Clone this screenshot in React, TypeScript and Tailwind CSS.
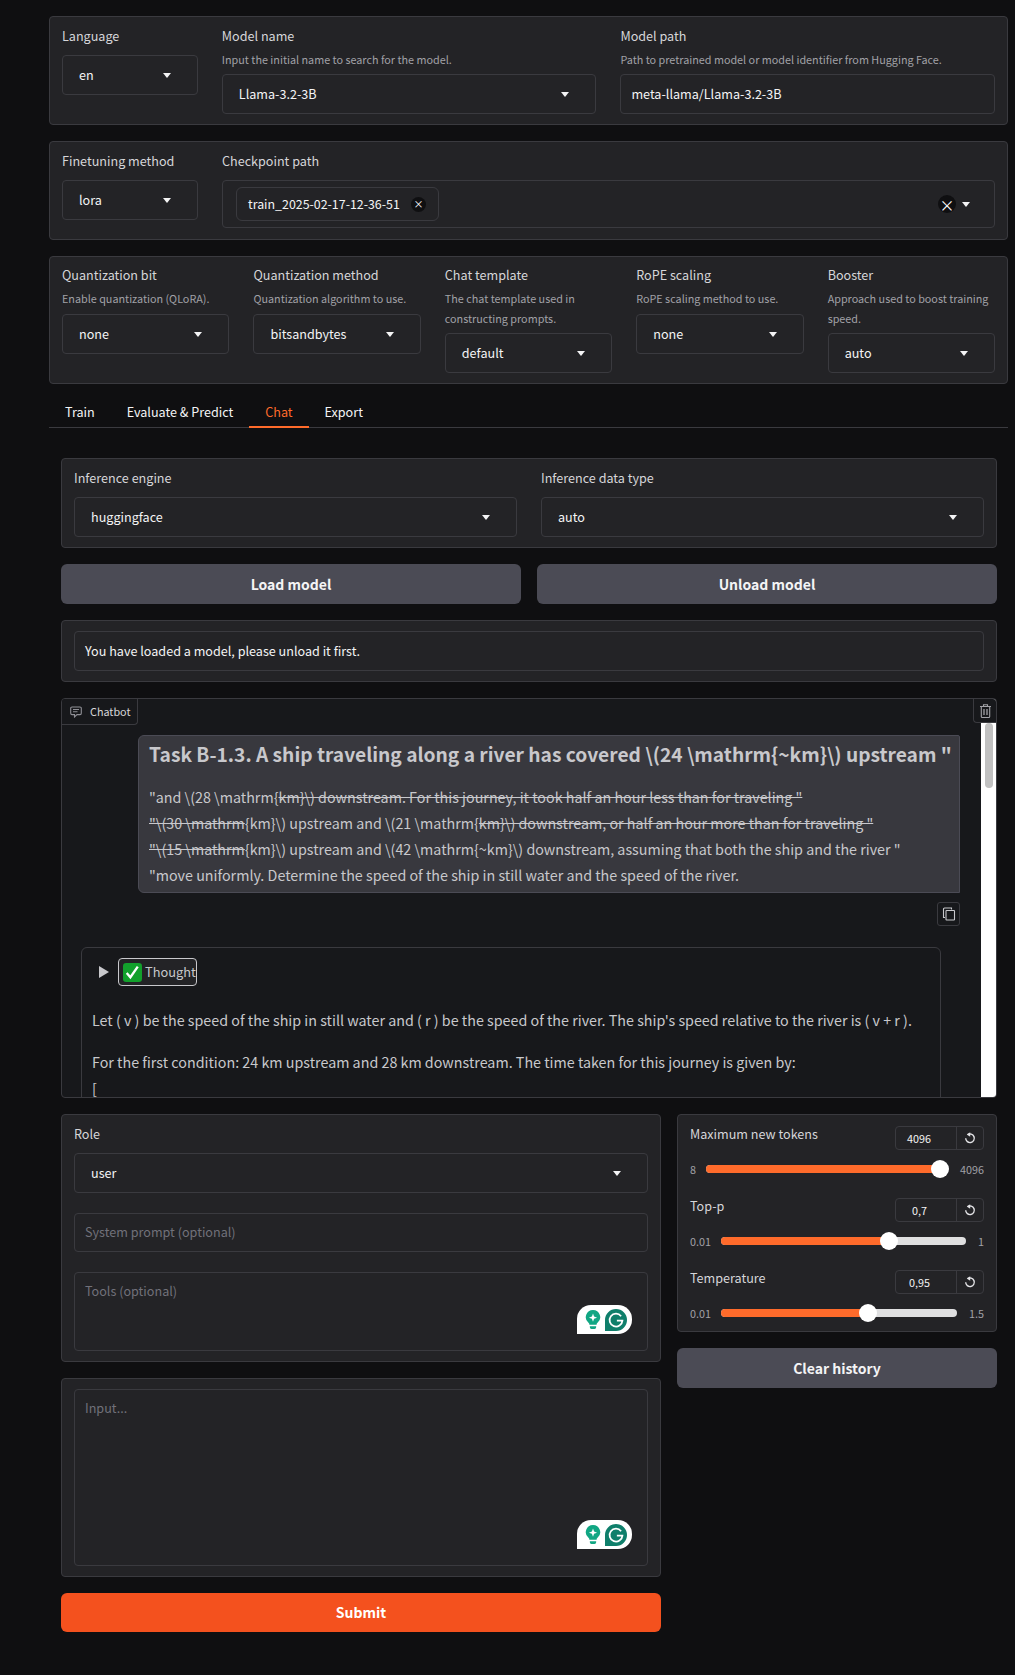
import React from "react";

const Arrow = () => (
  <svg width="8" height="5" viewBox="0 0 8 5" className="shrink-0"><path d="M0 0h8L4 5z" fill="#f4f4f5" /></svg>
);

const ResetIcon = () => (
  <svg width="12" height="12" viewBox="0 0 12 12" fill="none">
    <path d="M3.600 2.700a4.300 4.300 0 1 1-1.900 3.600" stroke="#e4e4e7" strokeWidth="1.400" />
    <path d="M6.200 0.200v4.600L2.800 2.500z" fill="#e4e4e7" />
  </svg>
);

const ChatIcon = () => (
  <svg width="12" height="12" viewBox="0 0 12 12" fill="none" stroke="#8f8f95" strokeWidth="1.100">
    <path d="M2 1h8a1.300 1.300 0 0 1 1.300 1.300v5A1.300 1.300 0 0 1 10 8.600H7L4.500 11V8.600H2A1.300 1.300 0 0 1 .7 7.300v-5A1.300 1.300 0 0 1 2 1z" />
    <path d="M3 3.500h6M3 5.800h4.500" />
  </svg>
);

const TrashIcon = () => (
  <svg width="11" height="14" viewBox="0 0 11 14" fill="none" stroke="#a1a1a6" strokeWidth="1.100">
    <path d="M0 2.500h11M3.500 2.500V.8h4v1.700" />
    <path d="M1.300 2.500v10a1 1 0 0 0 1 1h6.400a1 1 0 0 0 1-1v-10" />
    <path d="M4 5v6M7 5v6" strokeWidth="1.300" />
  </svg>
);

const CopyIcon = () => (
  <svg width="14" height="14" viewBox="0 0 14 14" fill="none" stroke="#c8c8cc" strokeWidth="1.100">
    <path d="M3 10.500H1.500V2a1 1 0 0 1 1-1H9.500v1.500" />
    <rect x="4" y="3.500" width="8.500" height="9.500" rx="0.600" />
  </svg>
);

const Label = ({ children }: { children: React.ReactNode }) => (
  <div className="text-[12.600px] leading-[20px] text-[#d6d6d9]">{children}</div>
);
const Info = ({ children }: { children: React.ReactNode }) => (
  <div className="text-[10.800px] leading-[20px] text-[#a1a1a6] mt-[3px]">{children}</div>
);

const Select = ({ value, cls = "" }: { value: string; cls?: string }) => (
  <div className={`h-[40px] flex items-center justify-between pl-[16px] pr-[26px] rounded-[4px] border border-[#3a3a3f] bg-[#232326] text-[12.600px] text-[#f4f4f5] ${cls}`}>
    <span>{value}</span>
    <Arrow />
  </div>
);

const Panel = ({ children, cls = "" }: { children: React.ReactNode; cls?: string }) => (
  <div className={`rounded-[4px] border border-[#3a3a3f] bg-[#232326] ${cls}`}>{children}</div>
);

const Grammarly = () => (
  <div className="absolute right-[15px] bottom-[16px] w-[55px] h-[29px] rounded-tl-[14px] rounded-r-[14px] bg-white flex items-center justify-between pl-[8px] pr-[5px]">
    <svg width="16" height="19" viewBox="0 0 17 21">
      <path d="M8.500 0a8 8 0 0 1 5 14.200c-.7.6-1 1.300-1 2H4.500c0-.7-.3-1.400-1-2A8 8 0 0 1 8.500 0z" fill="#11a683" />
      <path d="M5 18h7v1.200a1.800 1.800 0 0 1-1.800 1.800H6.800A1.800 1.800 0 0 1 5 19.200z" fill="#11a683" />
      <path d="M8.500 4l1.200 3.300L13 8.500l-3.300 1.200L8.500 13l-1.200-3.300L4 8.500l3.300-1.200z" fill="#fff" />
    </svg>
    <svg width="22" height="22" viewBox="0 0 25 25">
      <path d="M12.500 0a12.500 12.500 0 0 1 0 25H0V12.500A12.500 12.500 0 0 1 12.500 0z" fill="#0f7f6b" />
      <path d="M18.300 8.200a7.300 7.300 0 1 0 1.500 5h-6.300" fill="none" stroke="#fff" strokeWidth="2" />
    </svg>
  </div>
);

const Slider = ({ label, value, min, max, left, track, thumb, gapTop, inputPad }: { label: string; value: string; min: string; max: string; left: number; track: number; thumb: number; gapTop: string; inputPad: string }) => (
  <div className={gapTop}>
    <div className="flex justify-between h-[24px]">
      <span className="text-[12.600px] leading-[16px] text-[#d6d6d9]">{label}</span>
      <div className="flex w-[89px] h-[24px] rounded-[4px] border border-[#3a3a3f] text-[10.800px] text-[#f4f4f5]">
        <span className={`w-[61px] border-r border-[#3a3a3f] leading-[23px] ${inputPad}`}>{value}</span>
        <span className="flex-1 flex items-center justify-center"><ResetIcon /></span>
      </div>
    </div>
    <div className="flex items-center mt-[7px] h-[24px] text-[10.800px] text-[#a1a1a6]">
      <span style={{ width: left }} className="shrink-0">{min}</span>
      <div className="relative h-[8px] rounded-full bg-[#dfdfe0]" style={{ width: track }}>
        <div className="absolute left-0 top-0 h-full rounded-full bg-[#ff6b2b]" style={{ width: thumb }} />
        <div className="absolute top-[-5px] w-[18px] h-[18px] rounded-full bg-white" style={{ left: thumb - 9 }} />
      </div>
      <span className="ml-auto">{max}</span>
    </div>
  </div>
);

const S = ({ children }: { children: React.ReactNode }) => <span className="line-through">{children}</span>;

export default function App() {
  return (
    <div className="min-h-[1675px] bg-[#0f0f11] font-['Noto_Sans_CJK_SC','Noto_Sans',sans-serif] pl-[49px] pr-[7px] pt-[16px]">
      <div className="flex flex-col gap-[16px]">
        <Panel cls="h-[109px] px-[12px] pt-[9px] flex gap-[24px]">
          <div className="w-[136px]">
            <Label>Language</Label>
            <Select value="en" cls="mt-[9px]" />
          </div>
          <div className="w-[375px]">
            <Label>Model name</Label>
            <Info>Input the initial name to search for the model.</Info>
            <Select value="Llama-3.2-3B" cls="mt-[5px]" />
          </div>
          <div className="w-[375px]">
            <Label>Model path</Label>
            <Info>Path to pretrained model or model identifier from Hugging Face.</Info>
            <div className="mt-[5px] h-[40px] flex items-center pl-[10px] rounded-[4px] border border-[#3a3a3f] text-[12.600px] text-[#f4f4f5]">meta-llama/Llama-3.2-3B</div>
          </div>
        </Panel>

        <Panel cls="h-[99px] px-[12px] pt-[9px] flex gap-[24px]">
          <div className="w-[136px]">
            <Label>Finetuning method</Label>
            <Select value="lora" cls="mt-[9px]" />
          </div>
          <div className="flex-1">
            <Label>Checkpoint path</Label>
            <div className="mt-[9px] h-[48px] rounded-[4px] border border-[#3a3a3f] flex items-center pl-[13px] pr-[24px]">
              <div className="h-[34px] w-[203px] rounded-[6px] border border-[#3a3a3f] flex items-center justify-between pl-[11px] pr-[12px] text-[12.400px] text-[#f4f4f5] whitespace-nowrap">
                <span>train_2025-02-17-12-36-51</span>
                <span className="w-[15px] h-[15px] rounded-full bg-[#0f0f11] flex items-center justify-center text-[10px] leading-none text-white">×</span>
              </div>
              <span className="ml-auto w-[18px] h-[18px] rounded-full bg-[#0f0f11] flex items-center justify-center text-[15px] leading-none text-white">×</span>
              <span className="ml-[6px]"><Arrow /></span>
            </div>
          </div>
        </Panel>

        <Panel cls="h-[128px] px-[12px] pt-[8px] flex gap-[24px]">
          {[
            ["Quantization bit", "Enable quantization (QLoRA).", "none", "mt-[6px]"],
            ["Quantization method", "Quantization algorithm to use.", "bitsandbytes", "mt-[6px]"],
            ["Chat template", "The chat template used in constructing prompts.", "default", "mt-[5px]"],
            ["RoPE scaling", "RoPE scaling method to use.", "none", "mt-[6px]"],
            ["Booster", "Approach used to boost training speed.", "auto", "mt-[5px]"],
          ].map(([l, i, v, m]) => (
            <div key={l} className="flex-1 min-w-0">
              <Label>{l}</Label>
              <Info>{i}</Info>
              <Select value={v} cls={m} />
            </div>
          ))}
        </Panel>
      </div>

      <div className="mt-[16px] h-[28px] pt-[2px] border-b border-[#3a3a3f] flex text-[12.600px] leading-[20px] text-[#f4f4f5]">
        <span className="px-[16px]">Train</span>
        <span className="px-[16px]">Evaluate &amp; Predict</span>
        <span className="px-[16px] h-[26px] text-[#ff6b2b] border-b-2 border-[#ff6b2b]">Chat</span>
        <span className="px-[16px]">Export</span>
      </div>

      <div className="ml-[12px] mr-[11px] mt-[30px] flex flex-col gap-[16px]">
        <Panel cls="h-[90px] px-[12px] pt-[9px] flex gap-[24px]">
          <div className="flex-1">
            <Label>Inference engine</Label>
            <Select value="huggingface" cls="mt-[9px]" />
          </div>
          <div className="flex-1">
            <Label>Inference data type</Label>
            <Select value="auto" cls="mt-[9px]" />
          </div>
        </Panel>

        <div className="flex gap-[16px]">
          {["Load model", "Unload model"].map((b) => (
            <div key={b} className="flex-1 h-[40px] rounded-[6px] bg-[#4b4b55] flex items-center justify-center text-[14px] font-semibold text-[#f4f4f5]">{b}</div>
          ))}
        </div>

        <Panel cls="h-[62px] px-[12px] py-[10px]">
          <div className="h-[40px] rounded-[4px] border border-[#3a3a3f] flex items-center pl-[10px] text-[12.600px] text-[#f4f4f5]">You have loaded a model, please unload it first.</div>
        </Panel>

        <div className="relative h-[400px] rounded-[4px] border border-[#3a3a3f] bg-[#17181b] overflow-hidden">
          <div className="absolute left-0 top-0 z-10 h-[26px] w-[76px] rounded-br-[4px] border-r border-b border-[#3a3a3f] bg-[#17181b] flex items-center gap-[8px] pl-[8px] text-[10.800px] text-[#d6d6d9]">
            <ChatIcon />
            <span>Chatbot</span>
          </div>
          <div className="absolute right-0 top-0 z-10 h-[24px] w-[23px] rounded-bl-[4px] border-l border-b border-[#3a3a3f] bg-[#17181b] flex items-center justify-center">
            <TrashIcon />
          </div>
          <div className="absolute right-0 top-0 bottom-0 w-[15px] bg-white">
            <div className="absolute left-[4px] top-[24px] w-[8px] h-[65px] rounded-full bg-[#c1c1c1]" />
          </div>

          <div className="ml-[76px] mr-[36px] mt-[36px]">
            <div className="h-[158px] rounded-tl-[6px] rounded-tr-[2px] rounded-bl-[6px] border border-[#4b4b55] bg-[#38383e] pl-[10px] text-[#c8c8cc]">
              <div className="text-[19.200px] leading-[28px] font-semibold mt-[4px] whitespace-nowrap">{'Task B-1.3. A ship traveling along a river has covered \\(24 \\mathrm{~km}\\) upstream "'}</div>
              <div className="mt-[16px] text-[14.300px] leading-[26px] whitespace-nowrap">
                <div>{'"and \\(28 \\mathrm{'}<S>{'km}\\) downstream. For this journey, it took half an hour less than for traveling "'}</S></div>
                <div><S>{'"\\(30 \\mathrm'}</S>{'{km}\\) upstream and \\(21 \\mathrm{'}<S>{'km}\\) downstream, or half an hour more than for traveling "'}</S></div>
                <div><S>{'"\\(15 \\mathrm'}</S>{'{km}\\) upstream and \\(42 \\mathrm{~km}\\) downstream, assuming that both the ship and the river "'}</div>
                <div>{'"move uniformly. Determine the speed of the ship in still water and the speed of the river.'}</div>
              </div>
            </div>
            <div className="flex justify-end mt-[9px]">
              <div className="w-[23px] h-[24px] rounded-[3px] border border-[#3a3a3f] flex items-center justify-center">
                <CopyIcon />
              </div>
            </div>
          </div>

          <div className="ml-[19px] mr-[55px] mt-[21px] h-[200px] rounded-t-[6px] border border-[#3a3a3f] px-[10px] pt-[10px] text-[14.300px] text-[#c8c8cc]">
            <div className="flex items-center">
              <svg width="10" height="12" viewBox="0 0 10 12" className="ml-[7px] mr-[8px] shrink-0"><path d="M0 0l10 6-10 6z" fill="#c8c8cc" /></svg>
              <div className="ml-[1px] h-[28px] w-[79px] rounded-[4px] border border-[#c8c8cc] flex items-center gap-[3px] pl-[4px] text-[12.800px] bg-[#232326]">
                <svg width="19" height="19" viewBox="0 0 18 18" className="shrink-0"><rect width="18" height="18" rx="3" fill="#12a02c" /><path d="M3.500 9.500l3.500 4 7-10" fill="none" stroke="#fff" strokeWidth="2.200" /></svg>
                <span>Thought</span>
              </div>
            </div>
            <div className="mt-[21px] leading-[26px] whitespace-nowrap">{"Let ( v ) be the speed of the ship in still water and ( r ) be the speed of the river. The ship's speed relative to the river is ( v + r )."}</div>
            <div className="mt-[16px] leading-[26px] whitespace-nowrap">For the first condition: 24 km upstream and 28 km downstream. The time taken for this journey is given by:</div>
            <div className="leading-[26px]">[</div>
          </div>
        </div>

        <div className="flex gap-[16px] items-start">
          <div className="w-[600px] shrink-0 flex flex-col gap-[16px]">
            <Panel cls="h-[248px] px-[12px] pt-[9px]">
              <Label>Role</Label>
              <Select value="user" cls="mt-[9px]" />
              <div className="mt-[20px] h-[39px] rounded-[4px] border border-[#3a3a3f] flex items-center pl-[10px] text-[12.600px] text-[#71717a]">System prompt (optional)</div>
              <div className="relative mt-[20px] h-[79px] rounded-[4px] border border-[#3a3a3f] pl-[10px] pt-[9px] text-[12.600px] text-[#71717a]">
                Tools (optional)
                <Grammarly />
              </div>
            </Panel>
            <Panel cls="h-[199px] px-[12px] py-[10px]">
              <div className="relative h-[177px] rounded-[4px] border border-[#3a3a3f] pl-[10px] pt-[9px] text-[12.600px] text-[#71717a]">
                Input...
                <Grammarly />
              </div>
            </Panel>
            <div className="h-[39px] rounded-[6px] bg-[#f4511e] flex items-center justify-center text-[14px] font-semibold text-white">Submit</div>
          </div>

          <div className="flex-1 flex flex-col gap-[16px]">
            <Panel cls="h-[218px] px-[12px] pt-[11px]">
              <Slider label="Maximum new tokens" value="4096" min="8" max="4096" left={16} track={234} thumb={234} gapTop="" inputPad="pl-[11px]" />
              <Slider label="Top-p" value="0,7" min="0.01" max="1" left={31} track={245} thumb={168} gapTop="mt-[17px]" inputPad="pl-[16px]" />
              <Slider label="Temperature" value="0,95" min="0.01" max="1.5" left={31} track={236} thumb={147} gapTop="mt-[17px]" inputPad="pl-[13px]" />
            </Panel>
            <div className="h-[40px] rounded-[6px] bg-[#4b4b55] flex items-center justify-center text-[14px] font-semibold text-[#f4f4f5]">Clear history</div>
          </div>
        </div>
      </div>
    </div>
  );
}
